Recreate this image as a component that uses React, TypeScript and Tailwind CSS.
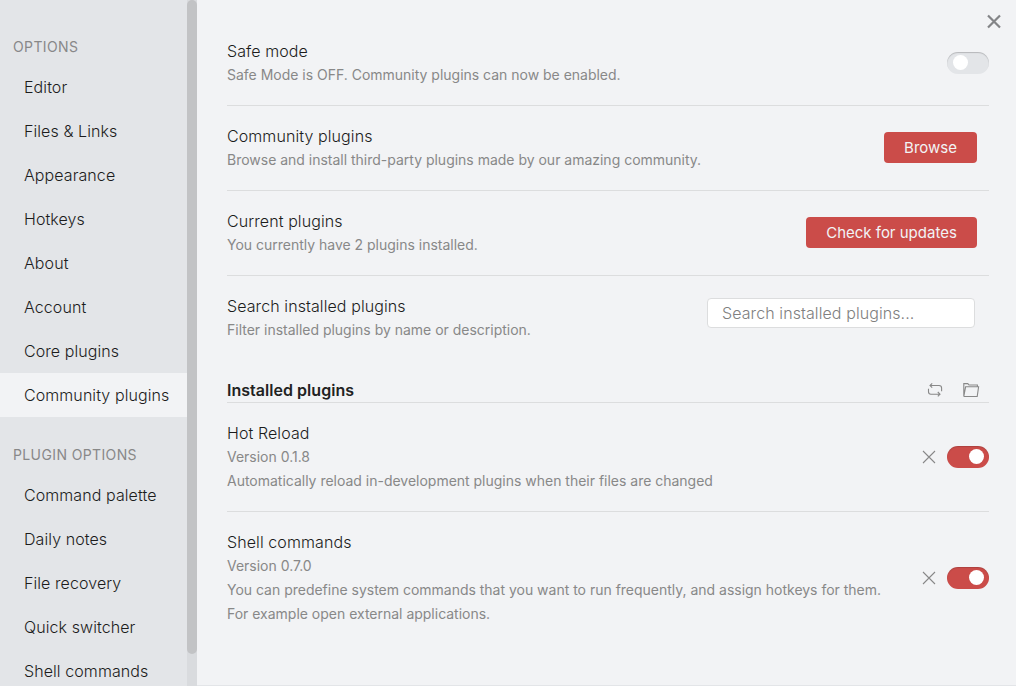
import React from "react";

const options = [
  "Editor",
  "Files & Links",
  "Appearance",
  "Hotkeys",
  "About",
  "Account",
  "Core plugins",
  "Community plugins",
];

const pluginOptions = [
  "Command palette",
  "Daily notes",
  "File recovery",
  "Quick switcher",
  "Shell commands",
];

function NavGroup({ title, items, active }: { title: string; items: string[]; active?: string }) {
  return (
    <div>
      <div className="h-[30px] pl-[13px] text-[14px] leading-6 tracking-[0.38px] text-[#888888]">{title}</div>
      {items.map((item) => (
        <div
          key={item}
          className={
            "h-11 whitespace-nowrap pl-6 text-[16px] leading-[44px] font-light tracking-[0.08px] text-[#1c1c1c] " +
            (item === active ? "bg-[#f2f3f5]" : "")
          }
        >
          {item}
        </div>
      ))}
    </div>
  );
}

function Toggle({ on }: { on?: boolean }) {
  return (
    <div
      className={
        "flex h-[22px] w-[42px] shrink-0 items-center rounded-full pb-px " +
        (on
          ? "justify-end bg-[#cb4c49] pr-[5px] shadow-[inset_0_1px_1px_rgba(0,0,0,0.15)]"
          : "bg-[#e3e5e8] pl-[6px] shadow-[inset_0_1px_1px_rgba(0,0,0,0.2)]")
      }
    >
      <div className="size-[15px] rounded-full bg-white" />
    </div>
  );
}

function Setting({
  name,
  lines,
  last,
  children,
}: {
  name: string;
  lines: string[];
  last?: boolean;
  children: React.ReactNode;
}) {
  return (
    <div
      className={
        "flex items-center justify-between py-[18px] " + (last ? "" : "border-b border-[#dcddde]")
      }
    >
      <div>
        <div className="text-[16px] leading-6 font-light tracking-[0.09px] text-[#1c1c1c]">{name}</div>
        {lines.map((line) => (
          <div key={line} className="text-[14px] leading-6 tracking-[-0.01px] whitespace-nowrap text-[#888888]">
            {line}
          </div>
        ))}
      </div>
      {children}
    </div>
  );
}

function Cross() {
  return (
    <svg width="14" height="14" viewBox="0 0 14 14" fill="none" stroke="#888" strokeWidth="1.1">
      <path d="M1 1L13 13M13 1L1 13" />
    </svg>
  );
}

function PluginControls() {
  return (
    <div className="flex items-center gap-[11px]">
      <Cross />
      <Toggle on />
    </div>
  );
}

export default function App() {
  return (
    <div className="flex h-[686px] w-[1016px] overflow-hidden bg-[#f2f3f5] font-['Inter','Liberation_Sans',sans-serif]">
      <nav className="flex w-[187px] shrink-0 flex-col gap-[26px] overflow-hidden bg-[#e3e5e8] pt-[35px]">
        <NavGroup title="OPTIONS" items={options} active="Community plugins" />
        <NavGroup title="PLUGIN OPTIONS" items={pluginOptions} />
      </nav>
      <div className="h-full w-[10px] shrink-0 bg-[#d9dbde]">
        <div className="h-[654px] rounded-full bg-[#c2c3c5]" />
      </div>
      <main className="relative h-full grow border-b border-[#e3e5e8] pt-[21px] pr-[27px] pl-[30px]">
        <svg
          className="absolute top-[14px] right-[15px]"
          width="14"
          height="15"
          viewBox="0 0 14 15"
          fill="none"
          stroke="#838487"
          strokeWidth="2.2"
        >
          <path d="M1 1.5L13 13.5M13 1.5L1 13.5" />
        </svg>
        <Setting name="Safe mode" lines={["Safe Mode is OFF. Community plugins can now be enabled."]}>
          <Toggle />
        </Setting>
        <Setting
          name="Community plugins"
          lines={["Browse and install third-party plugins made by our amazing community."]}
        >
          <button className="mr-3 mb-[2px] h-[31px] w-[93px] rounded-[4px] bg-[#cb4c49] pt-[2px] text-[15px] text-[#f2f3f5]">
            Browse
          </button>
        </Setting>
        <Setting name="Current plugins" lines={["You currently have 2 plugins installed."]}>
          <button className="mr-3 mb-[2px] h-[31px] w-[171px] rounded-[4px] bg-[#cb4c49] pt-[2px] text-[15px] text-[#f2f3f5]">
            Check for updates
          </button>
        </Setting>
        <Setting
          name="Search installed plugins"
          lines={["Filter installed plugins by name or description."]}
          last
        >
          <input
            className="mr-[14px] mb-[10px] h-[30px] w-[268px] rounded-[4px] border border-[#dcddde] bg-white px-[14px] text-[16px] font-light tracking-[0.09px] placeholder:text-[#808080]"
            placeholder="Search installed plugins..."
          />
        </Setting>
        <div className="mt-[18px] flex h-[25px] items-center justify-between border-b border-[#dcddde]">
          <h2 className="text-[16px] leading-6 font-semibold tracking-[0.03px] text-[#222222]">Installed plugins</h2>
          <div className="flex items-center gap-5 pr-[9px]">
            <svg width="16" height="16" viewBox="0 0 16 16" fill="none" stroke="#888" strokeWidth="1.1">
              <path d="M5.2 1.3L3 3.5L5.2 5.7M3 3.5H12Q14.6 3.5 14.6 6V9.2M10.8 10L13 12.2L10.8 14.4M13 12.2H4Q1.5 12.2 1.5 9.7V6.7" />
            </svg>
            <svg width="17" height="16" viewBox="0 0 17 16" fill="none" stroke="#888" strokeWidth="1.1">
              <path d="M0.8 14.5V1.6H4.8L6 3H14.4V4.8M0.8 14.5L2.6 4.8H15.6L14.2 14.5H0.8" />
            </svg>
          </div>
        </div>
        <Setting
          name="Hot Reload"
          lines={[
            "Version 0.1.8",
            "Automatically reload in-development plugins when their files are changed",
          ]}
        >
          <PluginControls />
        </Setting>
        <Setting
          name="Shell commands"
          lines={[
            "Version 0.7.0",
            "You can predefine system commands that you want to run frequently, and assign hotkeys for them.",
            "For example open external applications.",
          ]}
          last
        >
          <PluginControls />
        </Setting>
      </main>
    </div>
  );
}
